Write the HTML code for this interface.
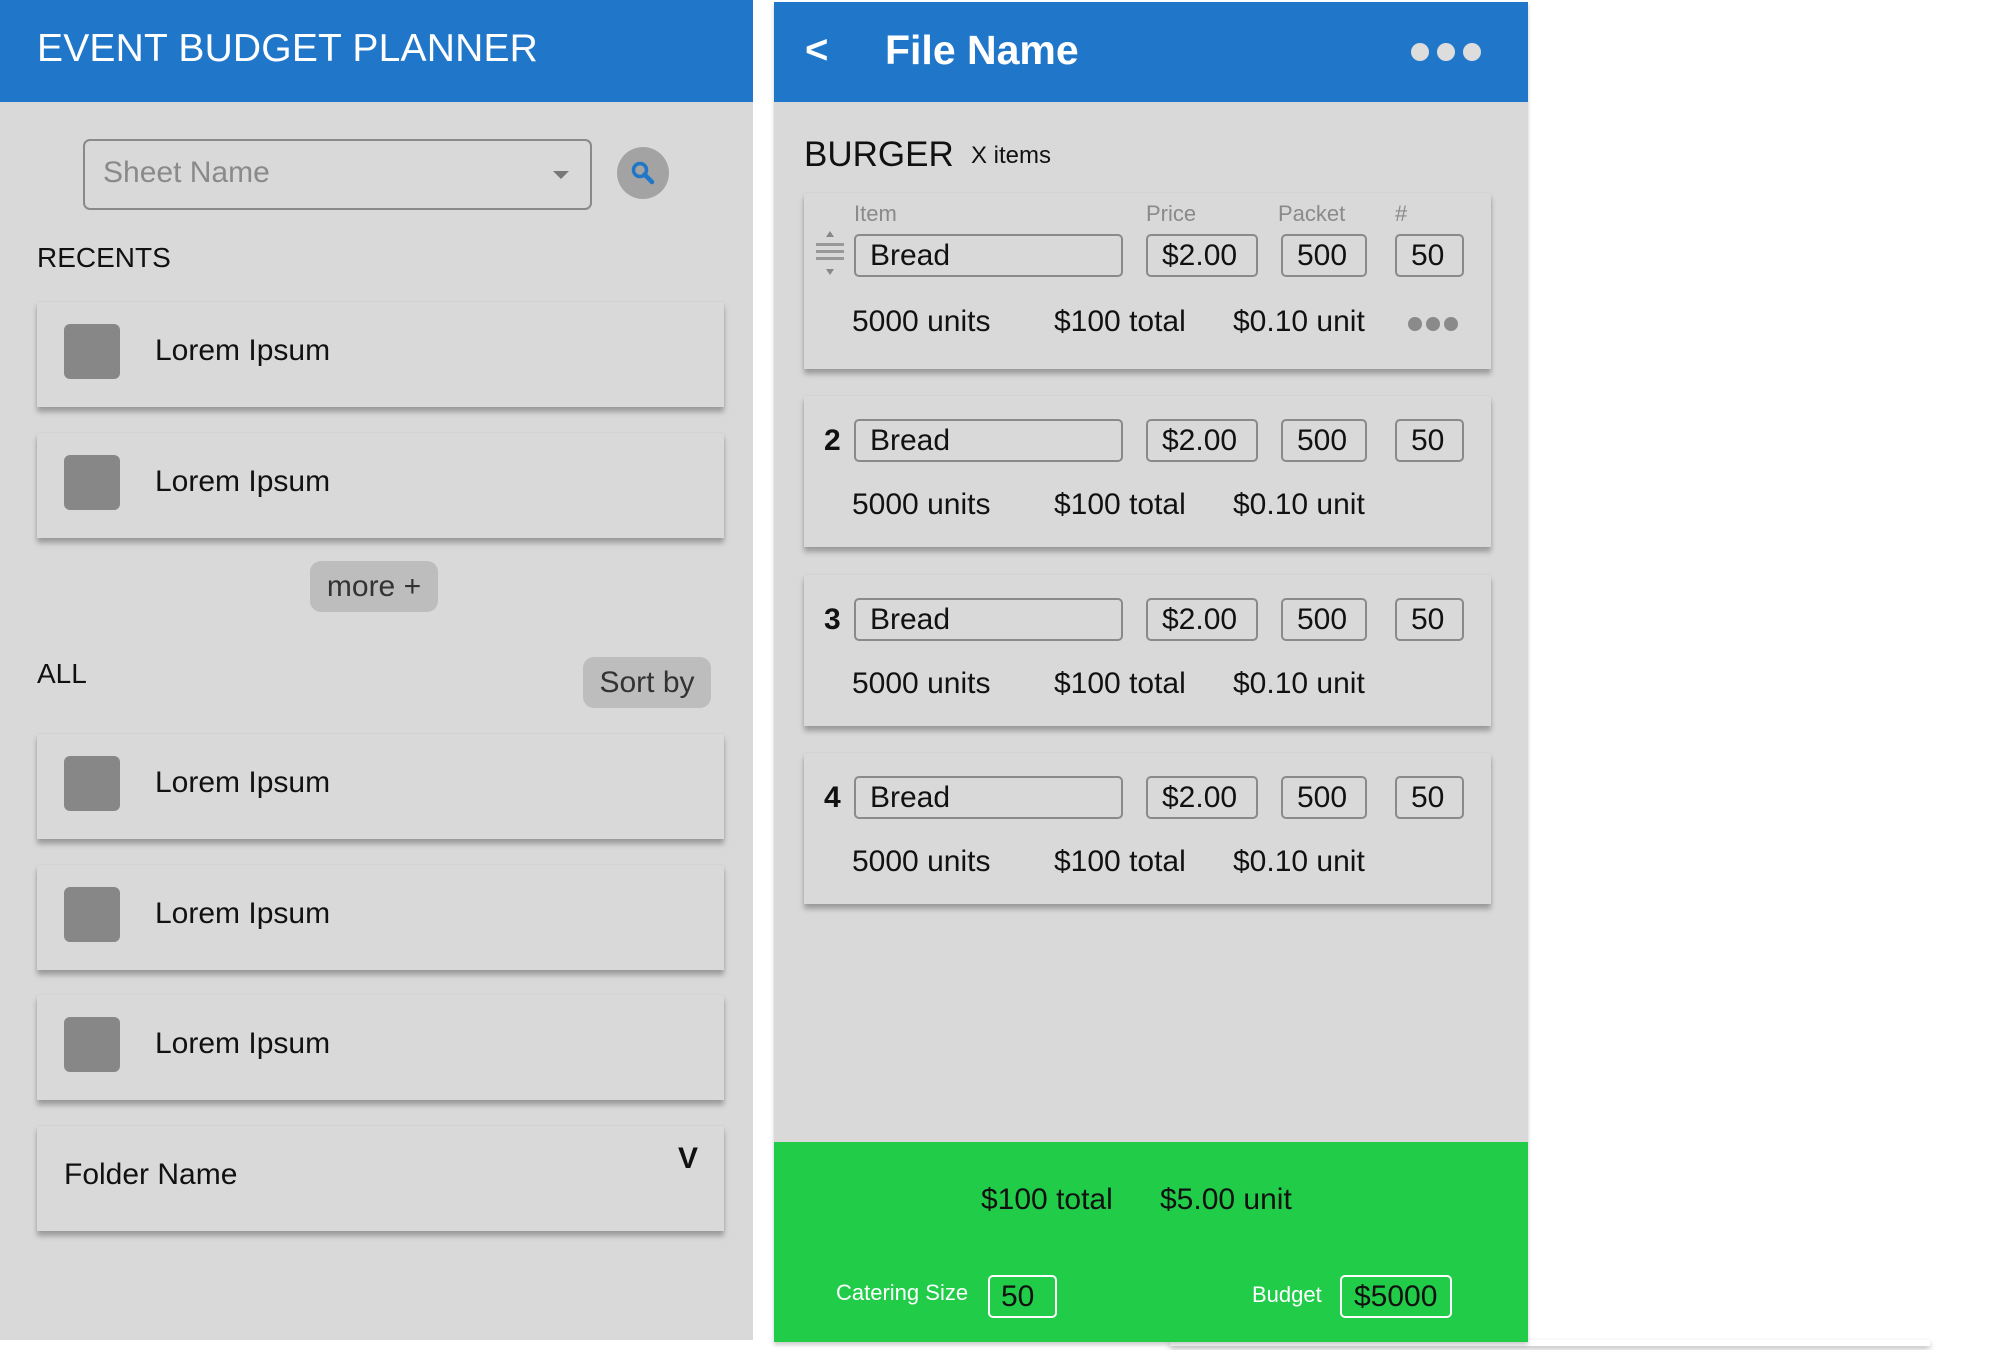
<!DOCTYPE html>
<html><head><meta charset="utf-8"><style>
*{box-sizing:border-box;margin:0;padding:0}
body{width:1998px;height:1350px;background:#fff;position:relative;overflow:hidden;font-family:"Liberation Sans",sans-serif;color:#111}
.a{position:absolute}
.panel{background:#d9d9d9}
.hdr{background:#2077c9}
.card{position:absolute;background:#d9d9d9;box-shadow:0 5px 5px rgba(0,0,0,.28),0 0 2px rgba(0,0,0,.08)}
.sq{position:absolute;left:27px;width:56px;height:55px;background:#878787;border-radius:6px}
.lt{position:absolute;left:118px;font-size:30px}
.box{position:absolute;border:2px solid #8a8a8a;border-radius:5px;height:43px;font-size:30px;line-height:39px;padding-left:14px}
.lbl{position:absolute;font-size:22px;color:#8a8a8a;top:8px}
.row{position:absolute;font-size:30px}
.num{position:absolute;left:20px;font-size:30px;font-weight:bold}
.dot{position:absolute;width:18px;height:18px;border-radius:50%}
</style></head><body>
<!-- left panel -->
<div class="a panel" style="left:0;top:0;width:753px;height:1340px"></div>
<div class="a hdr" style="left:0;top:0;width:753px;height:102px"></div>
<div class="a" style="left:37px;top:27px;font-size:39px;color:#fff;letter-spacing:0.2px">EVENT BUDGET PLANNER</div>
<div class="a" style="left:83px;top:139px;width:509px;height:71px;border:2px solid #8a8a8a;border-radius:7px"></div>
<div class="a" style="left:103px;top:156px;font-size:30px;color:#8a8a8a">Sheet Name</div>
<div class="a" style="left:553px;top:171px;width:0;height:0;border-left:8px solid transparent;border-right:8px solid transparent;border-top:8px solid #777"></div>
<div class="a" style="left:617px;top:147px;width:52px;height:52px;border-radius:50%;background:#a3a3a3"></div>
<svg class="a" style="left:629px;top:159px" width="28" height="28" viewBox="0 0 28 28"><circle cx="11" cy="11" r="6.5" fill="none" stroke="#2077c9" stroke-width="3.5"/><path d="M15.5 15.5 L23 23" stroke="#2077c9" stroke-width="4.5" stroke-linecap="round"/></svg>
<div class="a" style="left:37px;top:242px;font-size:28px;font-weight:500">RECENTS</div>

<div class="card" style="left:37px;top:302px;width:687px;height:105px"><div class="sq" style="top:22px"></div><div class="lt" style="top:32px">Lorem Ipsum</div></div>
<div class="card" style="left:37px;top:433px;width:687px;height:105px"><div class="sq" style="top:22px"></div><div class="lt" style="top:32px">Lorem Ipsum</div></div>
<div class="a" style="left:310px;top:561px;width:128px;height:51px;background:#bdbdbd;border-radius:11px;font-size:30px;color:#333;text-align:center;line-height:51px">more +</div>
<div class="a" style="left:37px;top:658px;font-size:28px;font-weight:500">ALL</div>
<div class="a" style="left:583px;top:657px;width:128px;height:51px;background:#bdbdbd;border-radius:11px;font-size:30px;color:#333;text-align:center;line-height:51px">Sort by</div>
<div class="card" style="left:37px;top:734px;width:687px;height:105px"><div class="sq" style="top:22px"></div><div class="lt" style="top:32px">Lorem Ipsum</div></div>
<div class="card" style="left:37px;top:865px;width:687px;height:105px"><div class="sq" style="top:22px"></div><div class="lt" style="top:32px">Lorem Ipsum</div></div>
<div class="card" style="left:37px;top:995px;width:687px;height:105px"><div class="sq" style="top:22px"></div><div class="lt" style="top:32px">Lorem Ipsum</div></div>
<div class="card" style="left:37px;top:1126px;width:687px;height:105px"><div class="a" style="left:27px;top:32px;font-size:30px">Folder Name</div><div class="a" style="left:641px;top:16px;font-size:30px;font-weight:bold">V</div></div>

<!-- right panel -->
<div class="a" style="left:1170px;top:1340px;width:760px;height:6px;box-shadow:0 3px 6px rgba(0,0,0,.25)"></div>
<div class="a panel" style="left:774px;top:2px;width:754px;height:1340px;box-shadow:0 3px 4px rgba(0,0,0,.2)"></div>
<div class="a hdr" style="left:774px;top:2px;width:754px;height:100px"></div>
<div class="a" style="left:805px;top:28px;font-size:40px;font-weight:bold;color:#fff">&lt;</div>
<div class="a" style="left:885px;top:27px;font-size:41px;font-weight:bold;color:#fff">File Name</div>
<div class="dot" style="left:1411px;top:43px;background:#ddd"></div>
<div class="dot" style="left:1437px;top:43px;background:#ddd"></div>
<div class="dot" style="left:1463px;top:43px;background:#ddd"></div>
<div class="a" style="left:804px;top:135px;font-size:35px">BURGER</div>
<div class="a" style="left:971px;top:142px;font-size:24px">X items</div>

<div class="card" style="left:804px;top:193px;width:687px;height:176px">
 <div class="lbl" style="left:50px">Item</div><div class="lbl" style="left:342px">Price</div><div class="lbl" style="left:474px">Packet</div><div class="lbl" style="left:591px">#</div>
 <svg class="a" style="left:8px;top:36px" width="36" height="48" viewBox="0 0 36 48"><path d="M18 2 L22 8 L14 8Z M18 46 L22 40 L14 40Z" fill="#888"/><rect x="4" y="14" width="28" height="3" fill="#999"/><rect x="4" y="21" width="28" height="3" fill="#999"/><rect x="4" y="28" width="28" height="3" fill="#999"/></svg>
 <div class="box" style="left:50px;top:41px;width:269px">Bread</div><div class="box" style="left:342px;top:41px;width:112px">$2.00</div><div class="box" style="left:477px;top:41px;width:86px">500</div><div class="box" style="left:591px;top:41px;width:69px">50</div>
 <div class="row" style="left:48px;top:112px">5000 units</div><div class="row" style="left:250px;top:112px">$100 total</div><div class="row" style="left:429px;top:112px">$0.10 unit</div>
 <div class="dot" style="left:604px;top:124px;width:14px;height:14px;background:#8a8a8a"></div><div class="dot" style="left:622px;top:124px;width:14px;height:14px;background:#8a8a8a"></div><div class="dot" style="left:640px;top:124px;width:14px;height:14px;background:#8a8a8a"></div>
</div>

<div class="card" style="left:804px;top:396px;width:687px;height:151px">
 <div class="num" style="top:28px">2</div>
 <div class="box" style="left:50px;top:23px;width:269px">Bread</div><div class="box" style="left:342px;top:23px;width:112px">$2.00</div><div class="box" style="left:477px;top:23px;width:86px">500</div><div class="box" style="left:591px;top:23px;width:69px">50</div>
 <div class="row" style="left:48px;top:92px">5000 units</div><div class="row" style="left:250px;top:92px">$100 total</div><div class="row" style="left:429px;top:92px">$0.10 unit</div>
</div>
<div class="card" style="left:804px;top:575px;width:687px;height:151px">
 <div class="num" style="top:28px">3</div>
 <div class="box" style="left:50px;top:23px;width:269px">Bread</div><div class="box" style="left:342px;top:23px;width:112px">$2.00</div><div class="box" style="left:477px;top:23px;width:86px">500</div><div class="box" style="left:591px;top:23px;width:69px">50</div>
 <div class="row" style="left:48px;top:92px">5000 units</div><div class="row" style="left:250px;top:92px">$100 total</div><div class="row" style="left:429px;top:92px">$0.10 unit</div>
</div>
<div class="card" style="left:804px;top:753px;width:687px;height:151px">
 <div class="num" style="top:28px">4</div>
 <div class="box" style="left:50px;top:23px;width:269px">Bread</div><div class="box" style="left:342px;top:23px;width:112px">$2.00</div><div class="box" style="left:477px;top:23px;width:86px">500</div><div class="box" style="left:591px;top:23px;width:69px">50</div>
 <div class="row" style="left:48px;top:92px">5000 units</div><div class="row" style="left:250px;top:92px">$100 total</div><div class="row" style="left:429px;top:92px">$0.10 unit</div>
</div>

<div class="a" style="left:774px;top:1142px;width:754px;height:200px;background:#20cc48"></div>
<div class="a" style="left:981px;top:1183px;font-size:30px">$100 total</div>
<div class="a" style="left:1160px;top:1183px;font-size:30px">$5.00 unit</div>
<div class="a" style="left:836px;top:1280px;font-size:22px;color:#fff">Catering Size</div>
<div class="a" style="left:988px;top:1275px;width:69px;height:43px;border:2px solid #fff;border-radius:5px;font-size:30px;line-height:39px;padding-left:11px">50</div>
<div class="a" style="left:1252px;top:1282px;font-size:22px;color:#fff">Budget</div>
<div class="a" style="left:1340px;top:1275px;width:112px;height:43px;border:2px solid #fff;border-radius:5px;font-size:30px;line-height:39px;padding-left:12px">$5000</div>
</body></html>
